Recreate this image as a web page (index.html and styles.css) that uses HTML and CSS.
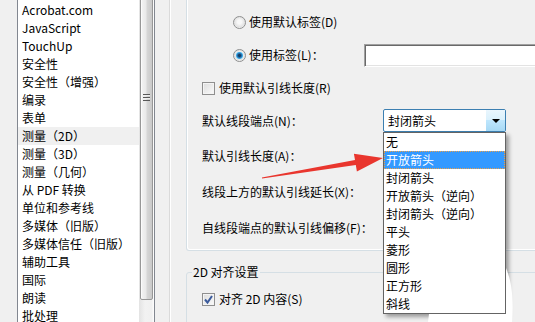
FILE: index.html
```html
<!DOCTYPE html>
<html lang="zh-CN">
<head>
<meta charset="utf-8">
<title>首选项</title>
<link rel="stylesheet" href="styles.css">
</head>
<body>
<div class="app">
  <div class="listbox">
    <ul class="list">
      <li>Acrobat.com</li>
      <li>JavaScript</li>
      <li>TouchUp</li>
      <li>安全性</li>
      <li>安全性（增强）</li>
      <li>编录</li>
      <li>表单</li>
      <li class="sel">测量（2D）</li>
      <li>测量（3D）</li>
      <li>测量（几何）</li>
      <li>从 PDF 转换</li>
      <li>单位和参考线</li>
      <li>多媒体（旧版）</li>
      <li>多媒体信任（旧版）</li>
      <li>辅助工具</li>
      <li>国际</li>
      <li>朗读</li>
      <li>批处理</li>
    </ul>
    <div class="scrollbar">
      <div class="thumb"><span class="grip"></span></div>
    </div>
  </div>
  <div class="panel">
    <div class="pane">
      <div class="group1">
        <div class="row r1 ind-radio"><span class="radio"></span><span class="rtext">使用默认标签(D)</span></div>
        <div class="row r2 ind-radio"><span class="radio on"></span><span class="rtext lbl-l">使用标签(L)：</span><span class="textbox"></span></div>
        <div class="row r3 ind-field"><span class="check"></span><span class="ctext">使用默认引线长度(R)</span></div>
        <div class="row r4 ind-field"><span class="flabel">默认线段端点(N)：</span>
          <div class="combo"><span class="combo-text">封闭箭头</span><span class="combo-btn"><span class="tri"></span></span></div>
        </div>
        <div class="row r5 ind-field"><span class="flabel">默认引线长度(A)：</span></div>
        <div class="row r6 ind-field"><span class="flabel">线段上方的默认引线延长(X)：</span></div>
        <div class="row r7 ind-field"><span class="flabel">自线段端点的默认引线偏移(F)：</span></div>
      </div>
      <fieldset class="group2">
        <legend>2D 对齐设置</legend>
        <div class="row g2row"><span class="check on"><svg width="11" height="11" viewBox="0 0 11 11"><path d="M2 5.5 L4.5 8.5 L9 2" fill="none" stroke="#3b5b9c" stroke-width="2"/></svg></span><span class="ctext">对齐 2D 内容(S)</span></div>
      </fieldset>
    </div>
  </div>
</div>
<ul class="dropdown">
  <li>无</li>
  <li class="hl">开放箭头</li>
  <li>封闭箭头</li>
  <li>开放箭头（逆向）</li>
  <li>封闭箭头（逆向）</li>
  <li>平头</li>
  <li>菱形</li>
  <li>圆形</li>
  <li>正方形</li>
  <li>斜线</li>
</ul>
<svg class="blob" width="535" height="322" viewBox="0 0 535 322">
  <path d="M506 268 C511 280 514 296 512 322 L428 322 L429 314 L506 314 Z" fill="#fff"/>
</svg>
<svg class="arrow" width="535" height="322" viewBox="0 0 535 322">
  <polygon points="261.9,177.4 355,160.1 353.9,153.7 383,158 356.9,171.5 355.8,165.1 262.1,178.6" fill="#e9362e"/>
</svg>
</body>
</html>
```
FILE: styles.css
```css
* { box-sizing: border-box; }
html, body {
  margin: 0;
  padding: 0;
}
body {
  width: 535px;
  height: 322px;
  overflow: hidden;
  position: relative;
  background: #f0f0f0;
  font-family: "Noto Sans CJK SC", "Noto Sans", sans-serif;
  font-size: 12px;
  line-height: 18px;
  color: #000;
}
.app {
  display: flex;
  height: 322px;
}
.listbox {
  margin-left: 17px;
  width: 138px;
  flex: none;
  height: 322px;
  display: flex;
  border-left: 1px solid #828790;
  border-right: 1px solid #828790;
}
.list {
  width: 121px;
  margin: 0;
  padding: 1px 0 0;
  list-style: none;
  background: #fff;
  overflow: hidden;
}
.list li {
  height: 18px;
  line-height: 18px;
  padding-left: 4px;
  white-space: nowrap;
}
.list li.sel { background: #f0f0f0; }
.scrollbar {
  width: 15px;
  height: 322px;
  overflow: hidden;
  background: linear-gradient(to right, #e3e3e3, #f2f2f2 40%, #f0f0f0 85%, #fff);
}
.thumb {
  margin-top: -106px;
  margin-left: 1px;
  width: 13px;
  height: 406px;
  border: 1px solid #979797;
  border-radius: 2px;
  background: linear-gradient(to right, #f4f4f4, #e9e9e9 45%, #d6d6d6 55%, #c9c9c9);
  box-shadow: inset 1px 1px #fbfbfb;
  display: flex;
  align-items: center;
  justify-content: center;
}
.grip {
  width: 7px;
  height: 7px;
  background: repeating-linear-gradient(to bottom, #585858 0 1px, #eeeeee 1px 2px, transparent 2px 3px);
}
.panel {
  flex: 1;
  padding-left: 14px;
  overflow: hidden;
  min-width: 0;
}
.pane {
  height: 322px;
  border-left: 1px solid #dadada;
  box-shadow: inset 1px 0 #fff;
  padding-left: 16px;
}
.group1 {
  width: 420px;
  height: 251px;
  border: 1px solid #d5dfe5;
  border-top: none;
  border-radius: 0 0 3px 3px;
  box-shadow: inset 1px -1px #fff;
  padding-top: 11px;
}
.row {
  display: flex;
  align-items: center;
  height: 22px;
  white-space: nowrap;
}
.ind-radio { padding-left: 46px; }
.ind-field { padding-left: 15px; }
.r1 { margin-top: 0; }
.r2 { margin-top: 11px; }
.r3 { margin-top: 11px; }
.r4 { margin-top: 10px; height: 23px; }
.r5 { margin-top: 13px; }
.r6 { margin-top: 14px; }
.r7 { margin-top: 14px; }
.radio {
  width: 13px;
  height: 13px;
  flex: none;
  border-radius: 50%;
  border: 1px solid #8e8f8f;
  background: radial-gradient(circle at 50% 45%, #f8f8f8 0 2px, #e2e2e2 5px, #f4f4f4 6px);
}
.radio.on {
  background:
    radial-gradient(circle at 50% 50%, #163e63 0 1px, #1f6aa8 2px, #3fa4e0 3px, #93d8f8 3.6px, transparent 4px),
    radial-gradient(circle at 50% 45%, #f8f8f8 0 2px, #e2e2e2 5px, #f4f4f4 6px);
}
.rtext { margin-left: 3px; }
.lbl-l { width: 115px; flex: none; }
.textbox {
  width: 220px;
  height: 23px;
  flex: none;
  background: #fff;
  border-top: 1px solid #a0a0a0;
  border-left: 1px solid #a0a0a0;
  border-bottom: 1px solid #fff;
  border-right: 1px solid #fff;
  box-shadow: inset 1px 1px #696969, inset -1px -1px #e3e3e3;
}
.check {
  width: 13px;
  height: 13px;
  flex: none;
  border: 1px solid #8f8f8f;
  background: linear-gradient(135deg, #dcdcdc, #fbfbfb);
  box-shadow: inset 0 0 0 1px #f4f4f4;
  display: flex;
  align-items: center;
  justify-content: center;
}
.check svg { display: block; }
.ctext { margin-left: 4px; }
.flabel { width: 181px; flex: none; }
.combo {
  width: 123px;
  height: 23px;
  flex: none;
  display: flex;
  border: 1px solid #3c7fb1;
  border-radius: 2px;
  background: #fff;
}
.combo-text {
  flex: 1;
  padding-left: 4px;
  line-height: 21px;
}
.combo-btn {
  width: 19px;
  background: linear-gradient(#eaf6fd, #d9f0fc 50%, #bee6fd 50%, #a7d9f5);
  display: flex;
  align-items: center;
  justify-content: center;
}
.tri {
  width: 0;
  height: 0;
  border-left: 4px solid transparent;
  border-right: 4px solid transparent;
  border-top: 4px solid #000;
  margin-top: 1px;
}
.group2 {
  width: 420px;
  margin: 12px 0 0;
  padding: 0 0 0 5px;
  height: 80px;
  border: 1px solid #d5dfe5;
  border-radius: 3px;
  min-width: 0;
}
.group2 legend {
  padding: 0 1px;
  line-height: 18px;
}
.g2row {
  height: 18px;
  margin-top: 9px;
  padding-left: 10px;
}
.dropdown {
  position: absolute;
  left: 383px;
  top: 132px;
  width: 123px;
  margin: 0;
  padding: 0;
  list-style: none;
  background: #fff;
  border: 1px solid #646464;
  box-shadow: 3px 3px 4px rgba(0, 0, 0, 0.35);
}
.dropdown li {
  height: 18px;
  line-height: 18px;
  padding-left: 2px;
  white-space: nowrap;
}
.dropdown li.hl {
  background: #3399ff;
  color: #fff;
  border: 1px dotted #e9a04a;
  padding-left: 1px;
  line-height: 16px;
}
.blob, .arrow {
  position: absolute;
  left: 0;
  top: 0;
  pointer-events: none;
}
```
